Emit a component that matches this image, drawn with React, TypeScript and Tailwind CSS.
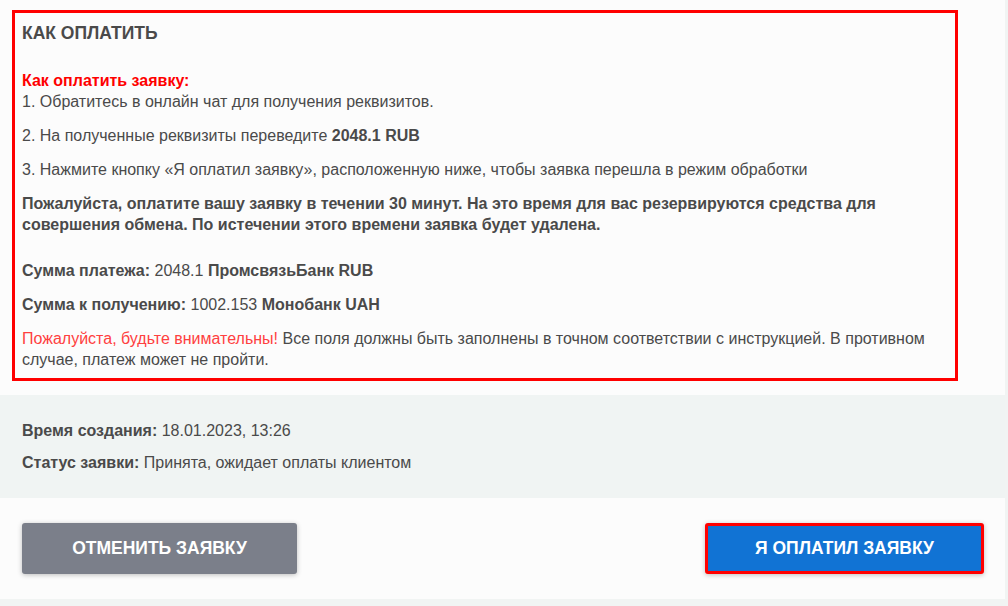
export default function App() {
  return (
    <div className="w-[1008px] h-[606px] bg-[#f1f4f3] overflow-hidden font-['Liberation_Sans',Arial,sans-serif] text-[#4a4a4a]">
      <div className="w-[1005px]">
        {/* Instructions */}
        <div className="bg-[#fcfcfc] pt-[10px] pb-[14px] pl-[12px]">
          <div className="w-[946px] border-[3px] border-[#ff0000] pt-[10px] pb-[8px] px-[7px] text-[16px] leading-[21px]">
            <div className="text-[17.5px] font-bold">КАК ОПЛАТИТЬ</div>
            <div className="mt-[26px] text-[#ff0000] font-bold">Как оплатить заявку:</div>
            <p>1. Обратитесь в онлайн чат для получения реквизитов.</p>
            <p className="mt-[13px]">
              2. На полученные реквизиты переведите <b>2048.1 RUB</b>
            </p>
            <p className="mt-[13px]">
              3. Нажмите кнопку «Я оплатил заявку», расположенную ниже, чтобы заявка перешла в режим обработки
            </p>
            <p className="mt-[13px] font-bold">
              Пожалуйста, оплатите вашу заявку в течении 30 минут. На это время для вас резервируются средства для
              совершения обмена. По истечении этого времени заявка будет удалена.
            </p>
            <p className="mt-[25px]">
              <b>Сумма платежа:</b> 2048.1 <b>ПромсвязьБанк RUB</b>
            </p>
            <p className="mt-[13px]">
              <b>Сумма к получению:</b> 1002.153 <b>Монобанк UAH</b>
            </p>
            <p className="mt-[13px]">
              <span className="text-[#ff4040]">Пожалуйста, будьте внимательны!</span> Все поля должны быть заполнены в
              точном соответствии с инструкцией. В противном случае, платеж может не пройти.
            </p>
          </div>
        </div>

        {/* Status */}
        <div className="bg-[#f0f4f3] h-[103px] pt-[25px] px-[22px] text-[16px] leading-[21px]">
          <p>
            <b>Время создания:</b> 18.01.2023, 13:26
          </p>
          <p className="mt-[11px]">
            <b>Статус заявки:</b> Принята, ожидает оплаты клиентом
          </p>
        </div>

        {/* Actions */}
        <div className="bg-[#fcfcfc] h-[101px] flex items-center justify-between pl-[22px] pr-[21px]">
          <button className="w-[275px] h-[51px] rounded-[3px] bg-[#7b7f8a] text-white text-[17.5px] font-bold shadow-[0_1px_5px_rgba(0,0,0,0.25)]">
            ОТМЕНИТЬ ЗАЯВКУ
          </button>
          <button className="w-[279px] h-[51px] rounded-[3px] bg-[#1173d4] border-[3px] border-[#ff0000] text-white text-[17.5px] font-bold shadow-[0_1px_5px_rgba(0,0,0,0.25)]">
            Я ОПЛАТИЛ ЗАЯВКУ
          </button>
        </div>
      </div>
    </div>
  );
}
